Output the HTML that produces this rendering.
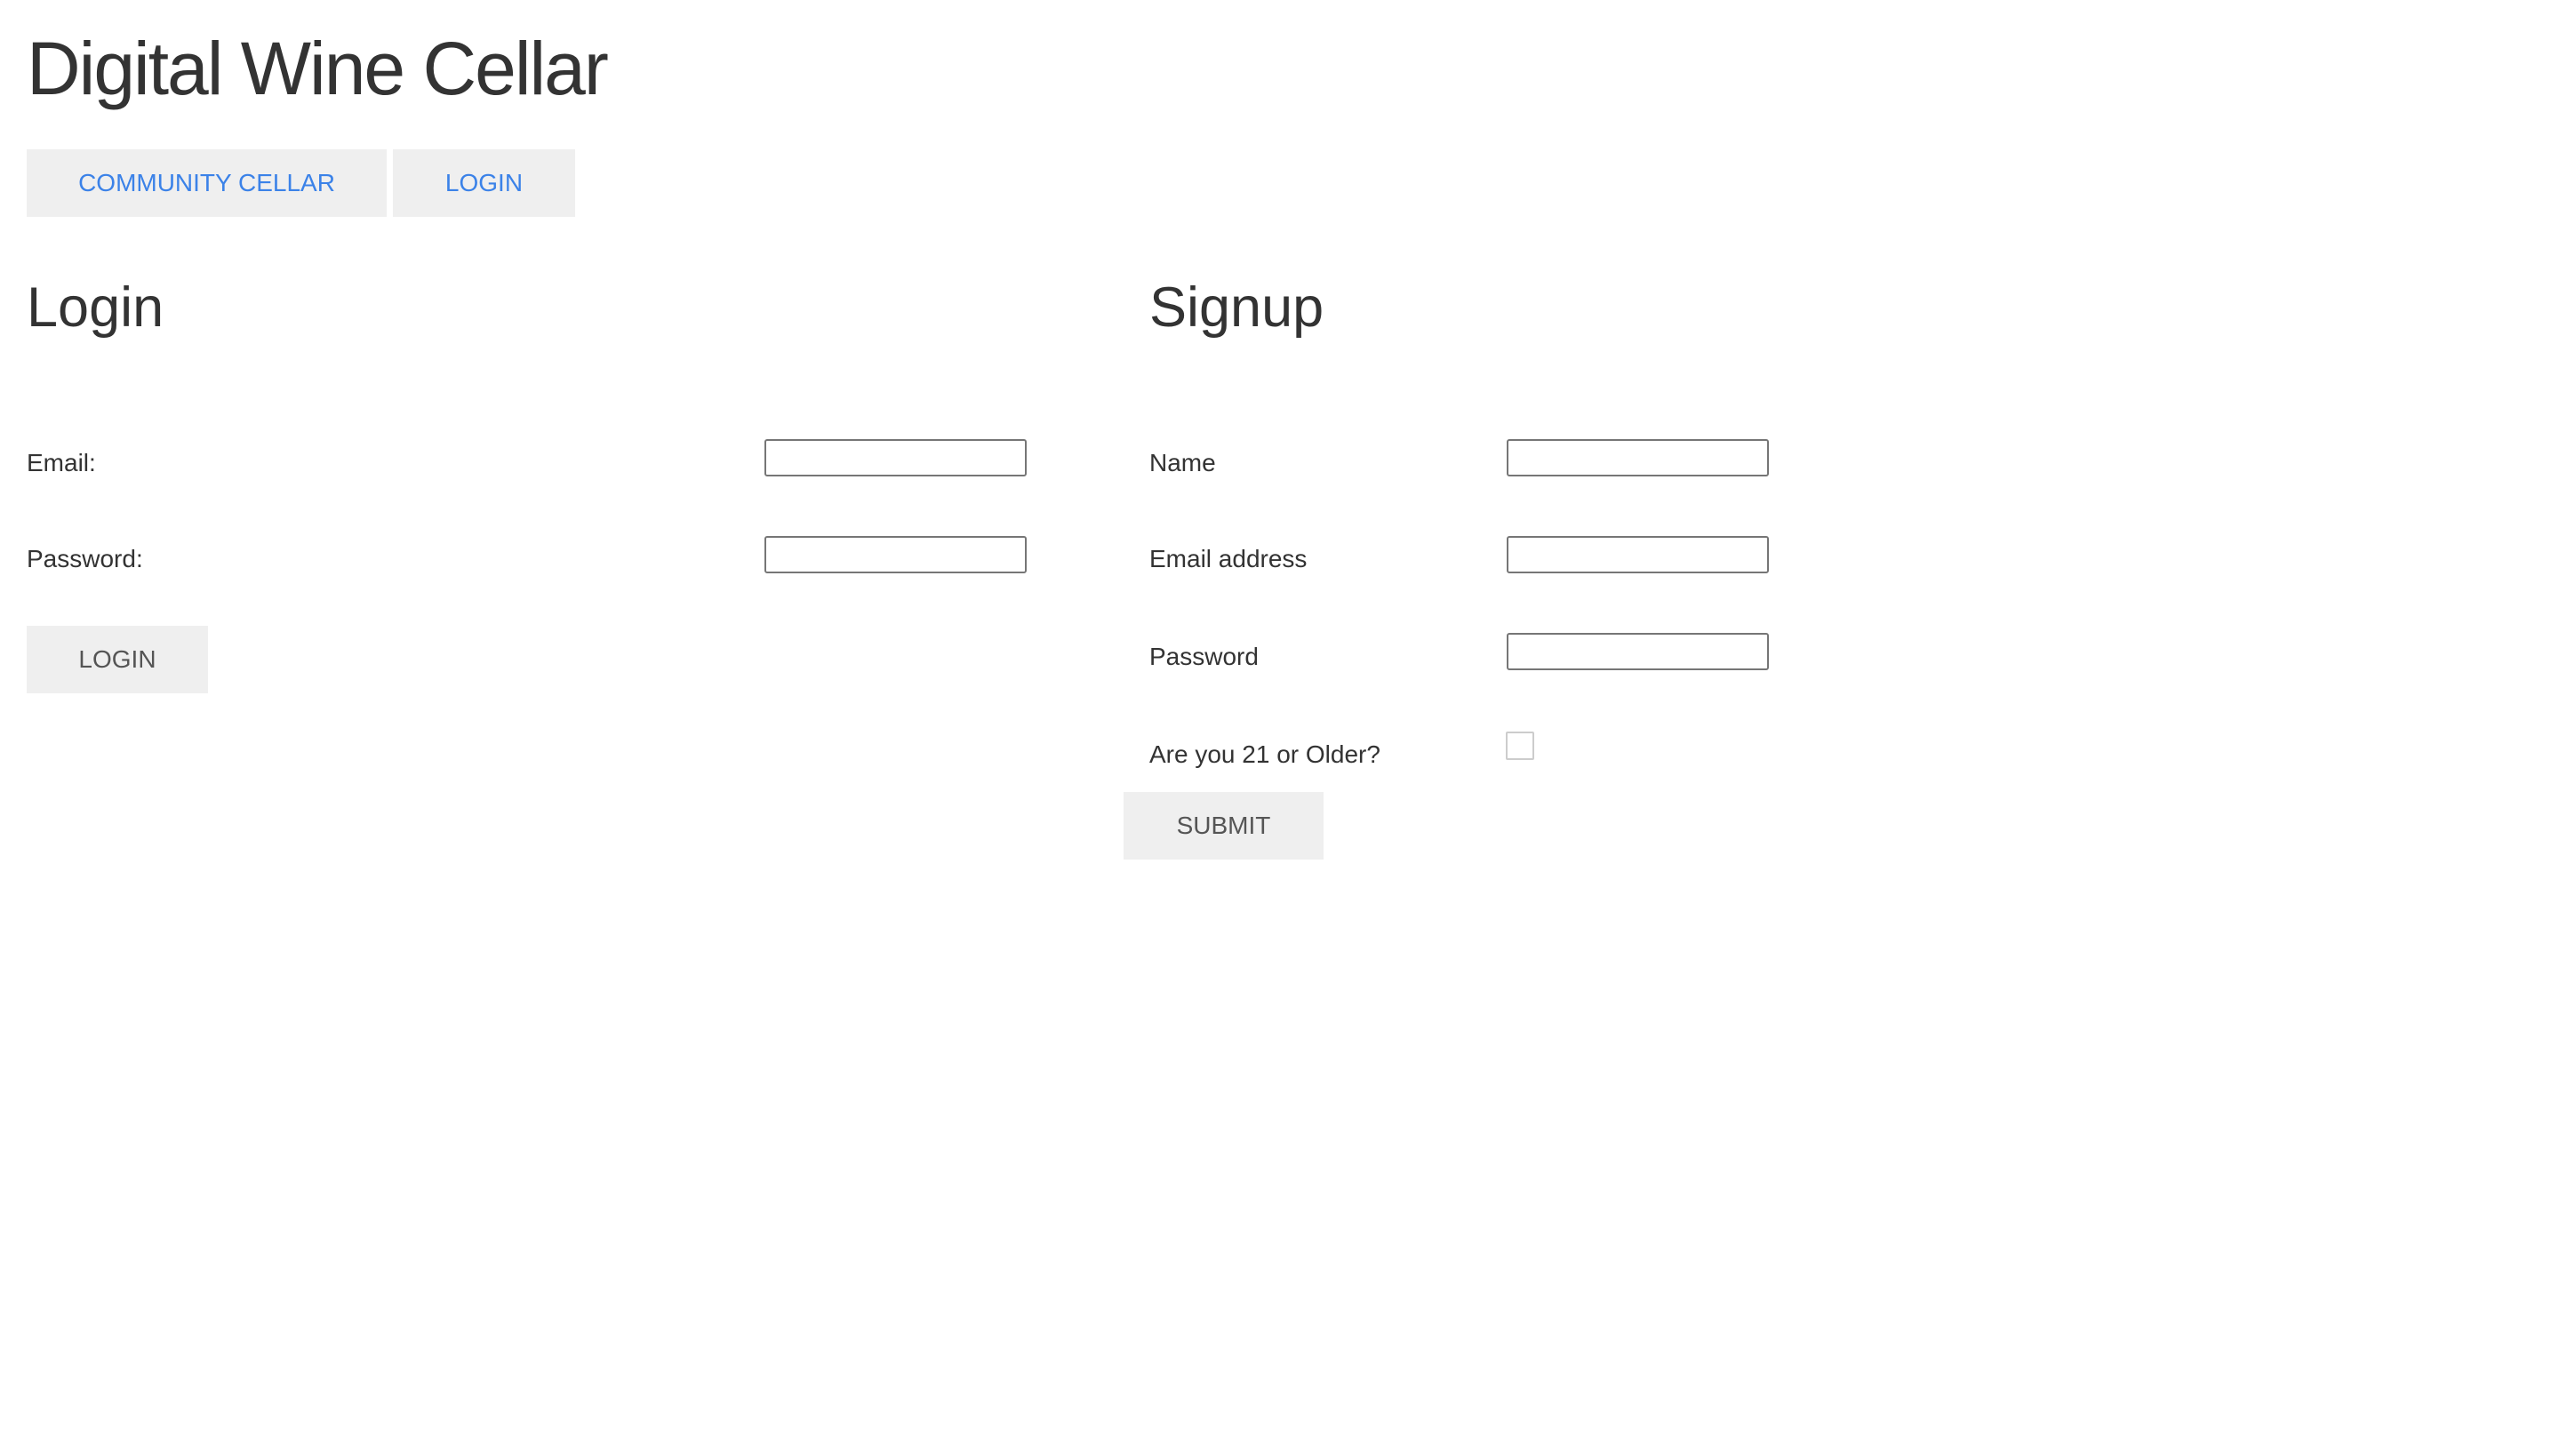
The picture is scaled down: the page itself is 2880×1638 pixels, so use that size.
<!DOCTYPE html>
<html><head><meta charset="utf-8"><style>
*{margin:0;padding:0;box-sizing:border-box}
body{width:2880px;height:1638px;background:#fff;font-family:"Liberation Sans",Arial,sans-serif;color:#333;position:relative;overflow:hidden}
.a{position:absolute;white-space:nowrap}
.btn{position:absolute;background:#efefef;display:flex;align-items:center;justify-content:center;font-size:28px;color:#555}
.blue{color:#3b82e8}
.in{position:absolute;width:295px;height:42px;border:2px solid #767676;border-radius:3px;background:#fff}
.lbl{position:absolute;font-size:28px;line-height:1;white-space:nowrap}
</style></head><body>
<div class="a" style="left:30px;top:29px;font-size:84px;line-height:96px;letter-spacing:-2px">Digital Wine Cellar</div>
<div class="btn blue" style="left:30px;top:168px;width:405px;height:76px">COMMUNITY CELLAR</div>
<div class="btn blue" style="left:442px;top:168px;width:205px;height:76px">LOGIN</div>

<div class="a" style="left:30px;top:310px;font-size:63px;line-height:72px">Login</div>
<div class="a" style="left:1293px;top:310px;font-size:63px;line-height:72px">Signup</div>

<div class="lbl" style="left:30px;top:507px">Email:</div>
<div class="lbl" style="left:30px;top:615px">Password:</div>
<div class="in" style="left:860px;top:494px"></div>
<div class="in" style="left:860px;top:603px"></div>
<div class="btn" style="left:30px;top:704px;width:204px;height:76px">LOGIN</div>

<div class="lbl" style="left:1293px;top:507px">Name</div>
<div class="lbl" style="left:1293px;top:615px">Email address</div>
<div class="lbl" style="left:1293px;top:725px">Password</div>
<div class="lbl" style="left:1293px;top:835px">Are you 21 or Older?</div>
<div class="in" style="left:1695px;top:494px"></div>
<div class="in" style="left:1695px;top:603px"></div>
<div class="in" style="left:1695px;top:712px"></div>
<div style="position:absolute;left:1694px;top:823px;width:32px;height:32px;border:2px solid #ccc;border-radius:2px"></div>
<div class="btn" style="left:1264px;top:891px;width:225px;height:76px">SUBMIT</div>
</body></html>
